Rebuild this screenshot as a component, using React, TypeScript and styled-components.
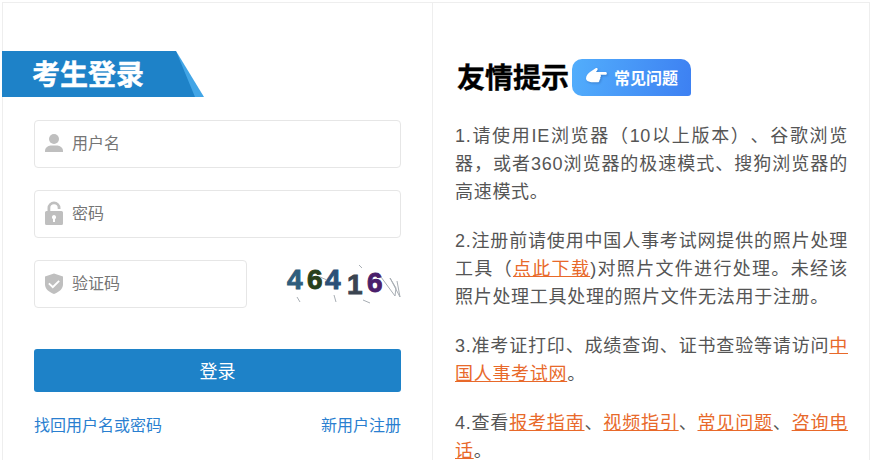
import React from "react";
import styled, { createGlobalStyle } from "styled-components";

const Global = createGlobalStyle`
  html, body { margin: 0; padding: 0; background: #fff; height: 460px; overflow: hidden; }
  * { box-sizing: border-box; }
  body { font-family: "Liberation Sans", "Noto Sans CJK SC", sans-serif; text-spacing-trim: space-all; }
`;

const Page = styled.div`
  width: 871px;
  height: 460px;
  padding: 2px 1px 0 2px;
  overflow: hidden;
`;
const Panel = styled.main`
  display: flex;
  height: 520px;
  border: 1px solid #eee;
`;
const LoginCol = styled.section`
  width: 430px;
  flex: none;
  border-right: 1px solid #eee;
  padding-top: 48px;
`;
const Ribbon = styled.div`
  position: relative;
  width: 202px;
  height: 46px;
  margin-left: -1px;
  padding-left: 30px;
  background: #42a5e6;
  clip-path: polygon(0 0, 174px 0, 100% 100%, 0 100%);
  color: #fff;
  font-size: 28px;
  font-weight: 700;
  line-height: 50px;
  -webkit-text-stroke: 0.4px #fff;
  &::before {
    content: "";
    position: absolute;
    inset: 0;
    background: #1e82c8;
    clip-path: polygon(0 0, 174px 0, 193px 100%, 0 100%);
  }
`;
const RibbonText = styled.span`
  position: relative;
`;
const Form = styled.form`
  display: flex;
  flex-direction: column;
  padding: 23px 31px 0 31px;
`;
const Field = styled.div<{ $w?: number; $gap?: number }>`
  display: flex;
  align-items: center;
  width: ${(p) => (p.$w ? `${p.$w}px` : "100%")};
  height: 47.5px;
  padding: 0 0 2px 10px;
  gap: 9px;
  border: 1px solid #e6e6e6;
  border-radius: 4px;
  background: #fff;
  color: #757575;
  font-size: 16px;
  margin-bottom: ${(p) => p.$gap ?? 22.5}px;
`;
const FieldLabel = styled.span`
  padding-bottom: 2px;
`;
const FieldIcon = styled.svg`
  width: 18px;
  height: 24px;
  flex: none;
  fill: #bfbfbf;
`;
const CaptchaRow = styled.div`
  display: flex;
  align-items: flex-start;
  justify-content: space-between;
`;
const Captcha = styled.svg`
  width: 130px;
  height: 48px;
  margin-right: -6px;
  flex: none;
`;
const Submit = styled.button`
  display: block;
  width: 100%;
  height: 43px;
  margin-top: 41px;
  padding: 0 0 2px;
  border: 0;
  border-radius: 3px;
  background: #1e82c8;
  color: #fff;
  font: 18px "Liberation Sans", "Noto Sans CJK SC", sans-serif;
`;
const LinkRow = styled.div`
  display: flex;
  justify-content: space-between;
  margin-top: 23px;
  font-size: 16px;
  line-height: 22px;
  color: #2a7fd0;
`;
const TipsCol = styled.section`
  flex: 1;
  padding: 56px 21px 0 22px;
`;
const TipsHead = styled.header`
  display: flex;
  align-items: center;
  gap: 3px;
  height: 37px;
  margin: 0 0 26px 2px;
`;
const TipsTitle = styled.h2`
  margin: 0;
  padding-bottom: 4px;
  font-size: 28px;
  font-weight: 700;
  color: #000;
  white-space: nowrap;
  -webkit-text-stroke: 0.4px #000;
`;
const Faq = styled.div`
  display: flex;
  align-items: center;
  gap: 7px;
  width: 119px;
  height: 37px;
  padding: 0 0 2px 14px;
  border-radius: 10px 10px 3px 10px;
  background: linear-gradient(100deg, #52aefc, #3d80f2);
  color: #fff;
  font-size: 16px;
  font-weight: 700;
  white-space: nowrap;
`;
const Hand = styled.svg`
  width: 21px;
  height: 19px;
  fill: #fff;
  flex: none;
  filter: drop-shadow(1px 1px 1px rgba(20, 60, 130, 0.35));
`;
const Tip = styled.p`
  margin: 0 0 21px;
  font-size: 18px;
  line-height: 28px;
  letter-spacing: 0.7px;
  text-align: justify;
  color: #555;
`;
const TipLink = styled.a`
  color: #e8692a;
  text-decoration: underline;
`;

export default function App() {
  return (
    <Page>
      <Global />
      <Panel>
        <LoginCol>
          <Ribbon><RibbonText>考生登录</RibbonText></Ribbon>
          <Form>
            <Field>
              <FieldIcon viewBox="0 0 18 24">
                <circle cx="9" cy="8" r="5" />
                <path d="M0 20c0-3.500 3-5 5.500-5.500h7C15 15 18 16.500 18 20v1H0z" />
              </FieldIcon>
              <FieldLabel>用户名</FieldLabel>
            </Field>
            <Field>
              <FieldIcon viewBox="0 0 18 24">
                <path fillRule="evenodd" d="M1.500 10h1V7a6.500 6.500 0 0 1 13 0v1h-2.800V7a3.700 3.700 0 0 0-7.400 0v3h11.200A1.500 1.500 0 0 1 18 11.500v11a1.500 1.500 0 0 1-1.500 1.500h-15A1.500 1.500 0 0 1 0 22.500v-11A1.500 1.500 0 0 1 1.500 10zM9 14a2.200 2.200 0 0 0-1 4.100V21h2v-2.900A2.200 2.200 0 0 0 9 14z" />
              </FieldIcon>
              <FieldLabel>密码</FieldLabel>
            </Field>
            <CaptchaRow>
              <Field $w={213} $gap={0}>
                <FieldIcon viewBox="0 0 18 24">
                  <path fillRule="evenodd" d="M9 2.500l9 3v8c0 4.500-4 7.500-9 9.500-5-2-9-5-9-9.500v-8zM4.500 11.800l-1.300 1.300L7.800 17.500l7-7-1.300-1.300-5.700 5.600z" />
                </FieldIcon>
                <FieldLabel>验证码</FieldLabel>
              </Field>
              <Captcha viewBox="0 0 130 48">
                <g fontFamily="'Liberation Sans', sans-serif" fontWeight="700" fontSize="28" strokeWidth="0.9">
                  <text x="10" y="29" fill="#2f5d7c" stroke="#2f5d7c">4</text>
                  <text x="30" y="29" fill="#28401c" stroke="#28401c">6</text>
                  <text x="48" y="29" fill="#2c5078" stroke="#2c5078">4</text>
                  <text x="70" y="34" fill="#3a4450" stroke="#3a4450">1</text>
                  <text x="90" y="32" fill="#4a1f6b" stroke="#4a1f6b">6</text>
                </g>
                <g stroke="#a8aeb4" strokeWidth="1" fill="none">
                  <path d="M104 17l14 19 1-8-6-10 10 19-3-16" />
                  <path d="M43 17l7 3" />
                  <path d="M20 37l3 5" />
                  <path d="M57 35l2 7" />
                  <path d="M86 40l7 3" />
                  <path d="M82 5l3 3" />
                </g>
              </Captcha>
            </CaptchaRow>
            <Submit type="button">登录</Submit>
            <LinkRow>
              <span>找回用户名或密码</span>
              <span>新用户注册</span>
            </LinkRow>
          </Form>
        </LoginCol>
        <TipsCol>
          <TipsHead>
            <TipsTitle>友情提示</TipsTitle>
            <Faq>
              <Hand viewBox="0 0 21 19">
                <path d="M0 11.500c0-3 2-5 4-6.500C6 3.500 8 2.500 10 1c1.500-.5 2 1 1.300 2.300L10 5h9.500c1.800 0 1.800 2.800 0 2.800h-5c.8 1 .5 2.200-.3 2.700.5 1 0 2-.8 2.400.3 1.300-.5 2.300-1.600 2.300H7c-4 0-7-1.500-7-3.700z" />
              </Hand>
              常见问题
            </Faq>
          </TipsHead>
          <Tip>1.请使用IE浏览器（10以上版本）、谷歌浏览器，或者360浏览器的极速模式、搜狗浏览器的高速模式。</Tip>
          <Tip>2.注册前请使用中国人事考试网提供的照片处理工具（<TipLink>点此下载</TipLink>)对照片文件进行处理。未经该照片处理工具处理的照片文件无法用于注册。</Tip>
          <Tip>3.准考证打印、成绩查询、证书查验等请访问<TipLink>中国人事考试网</TipLink>。</Tip>
          <Tip>4.查看<TipLink>报考指南</TipLink>、<TipLink>视频指引</TipLink>、<TipLink>常见问题</TipLink>、<TipLink>咨询电话</TipLink>。</Tip>
        </TipsCol>
      </Panel>
    </Page>
  );
}
